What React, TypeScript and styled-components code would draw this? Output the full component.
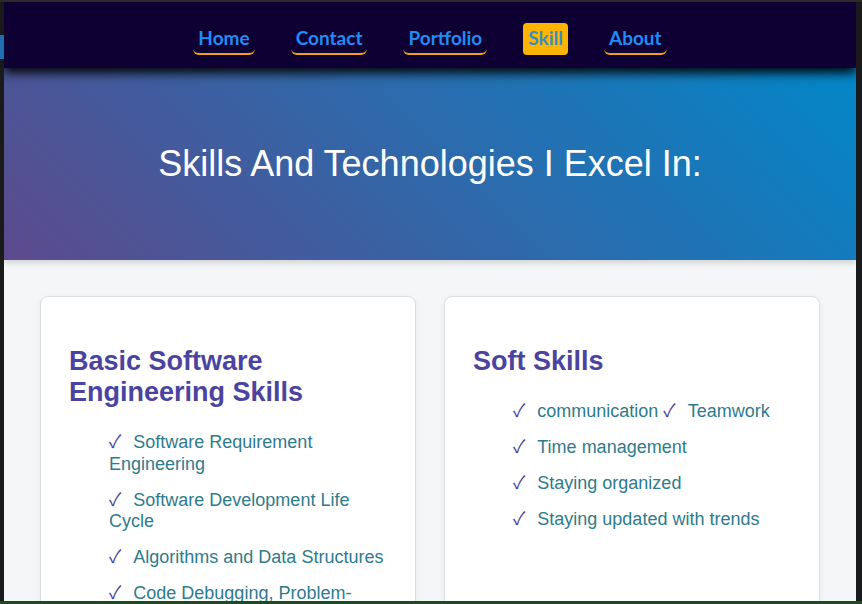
import React from "react";
import styled, { createGlobalStyle } from "styled-components";

const GlobalStyle = createGlobalStyle`
  html, body {
    margin: 0;
    padding: 0;
    background: #151515;
    overflow: hidden;
  }
  * { box-sizing: border-box; }
`;

const Screen = styled.div`
  width: 862px;
  height: 604px;
  display: flex;
  flex-direction: column;
  background: #151515;
`;

const TopEdge = styled.div`
  height: 2px;
  flex: none;
  background: #2b2b2b;
`;

const Middle = styled.div`
  flex: 1;
  min-height: 0;
  display: flex;
`;

const SideEdge = styled.div<{ $w: number }>`
  width: ${(p) => p.$w}px;
  flex: none;
  background: #1a1a1a;
  display: flex;
  flex-direction: column;
`;

const EdgeMark = styled.div`
  margin-top: 33px;
  height: 24px;
  background: #1f6fb0;
`;

const BottomEdge = styled.div`
  height: 3px;
  flex: none;
  background: #1d4a20;
`;

const Page = styled.div`
  flex: 1;
  min-width: 0;
  overflow: hidden;
  background: #f5f6f8;
  display: flex;
  flex-direction: column;
  font-family: "Liberation Sans", Arial, sans-serif;
`;

const NavBar = styled.nav`
  position: relative;
  z-index: 2;
  flex: none;
  height: 66px;
  padding-top: 21px;
  background: #0e0033;
  box-shadow: 0 5px 10px rgba(0, 0, 0, 0.95);
`;

const NavList = styled.ul`
  list-style: none;
  margin: 0;
  padding: 0;
  display: flex;
  justify-content: center;
  gap: 36px;
`;

const NavLink = styled.a<{ $active?: boolean }>`
  display: block;
  padding: 5px;
  line-height: 20px;
  font-family: Lato, "Open Sans", sans-serif;
  font-weight: 700;
  font-size: 19px;
  text-decoration: none;
  color: ${(p) => (p.$active ? "#3a8ec0" : "#1e8cf5")};
  background: ${(p) => (p.$active ? "#ffb400" : "transparent")};
  border-bottom: 2px solid ${(p) => (p.$active ? "transparent" : "#f0a30a")};
  border-radius: ${(p) => (p.$active ? "4px" : "6px")};
`;

const Hero = styled.header`
  position: relative;
  z-index: 1;
  flex: none;
  height: 192px;
  display: flex;
  align-items: center;
  justify-content: center;
  background: linear-gradient(45deg, #5c4a8c 0%, #0287c8 100%);
  box-shadow: 0 3px 6px rgba(0, 0, 0, 0.15);
`;

const HeroTitle = styled.h1`
  margin: 0;
  color: #ffffff;
  font-weight: 400;
  font-size: 36px;
  font-family: "Liberation Sans", Arial, sans-serif;
`;

const Main = styled.main`
  flex: none;
  padding: 36px 36px 0;
  display: grid;
  grid-template-columns: 1fr 1fr;
  gap: 28px;
  align-items: stretch;
`;

const Card = styled.section`
  background: #ffffff;
  border: 1px solid #dedede;
  border-radius: 8px;
  box-shadow: 0 2px 6px rgba(0, 0, 0, 0.06);
  padding: 49px 28px 28px;
  min-height: 420px;
`;

const CardTitle = styled.h2`
  margin: 0;
  font-size: 27px;
  font-weight: 700;
  color: #4a44a0;
  font-family: "Liberation Sans", Arial, sans-serif;
`;

const SkillList = styled.ul`
  list-style: none;
  margin: 24px 0 0;
  padding-left: 40px;
`;

const Check = `
  content: "✓";
  font-family: "Noto Sans CJK JP", "DejaVu Sans", sans-serif;
  font-size: 18px;
  line-height: 0;
  color: #4b3f9b;
  margin-right: 12px;
`;

const SkillItem = styled.li`
  font-size: 18px;
  line-height: 1.2;
  color: #2e7b8c;
  margin-bottom: 0.8em;
  &::before {
    ${Check}
  }
`;

const InlineSkill = styled.span`
  &::before {
    ${Check}
  }
`;

const navItems = ["Home", "Contact", "Portfolio", "Skill", "About"];

const basicSkills = [
  "Software Requirement Engineering",
  "Software Development Life Cycle",
  "Algorithms and Data Structures",
  "Code Debugging, Problem-Solving",
];

const softSkills = ["Time management", "Staying organized", "Staying updated with trends"];

export default function App() {
  return (
    <>
      <GlobalStyle />
      <Screen>
        <TopEdge />
        <Middle>
          <SideEdge $w={4}>
            <EdgeMark />
          </SideEdge>
          <Page>
            <NavBar>
              <NavList>
                {navItems.map((item) => (
                  <li key={item}>
                    <NavLink href="#" $active={item === "Skill"}>
                      {item}
                    </NavLink>
                  </li>
                ))}
              </NavList>
            </NavBar>
            <Hero>
              <HeroTitle>Skills And Technologies I Excel In:</HeroTitle>
            </Hero>
            <Main>
              <Card>
                <CardTitle>Basic Software Engineering Skills</CardTitle>
                <SkillList>
                  {basicSkills.map((s) => (
                    <SkillItem key={s}>{s}</SkillItem>
                  ))}
                </SkillList>
              </Card>
              <Card>
                <CardTitle>Soft Skills</CardTitle>
                <SkillList>
                  <SkillItem>
                    communication <InlineSkill>Teamwork</InlineSkill>
                  </SkillItem>
                  {softSkills.map((s) => (
                    <SkillItem key={s}>{s}</SkillItem>
                  ))}
                </SkillList>
              </Card>
            </Main>
          </Page>
          <SideEdge $w={6} />
        </Middle>
        <BottomEdge />
      </Screen>
    </>
  );
}
